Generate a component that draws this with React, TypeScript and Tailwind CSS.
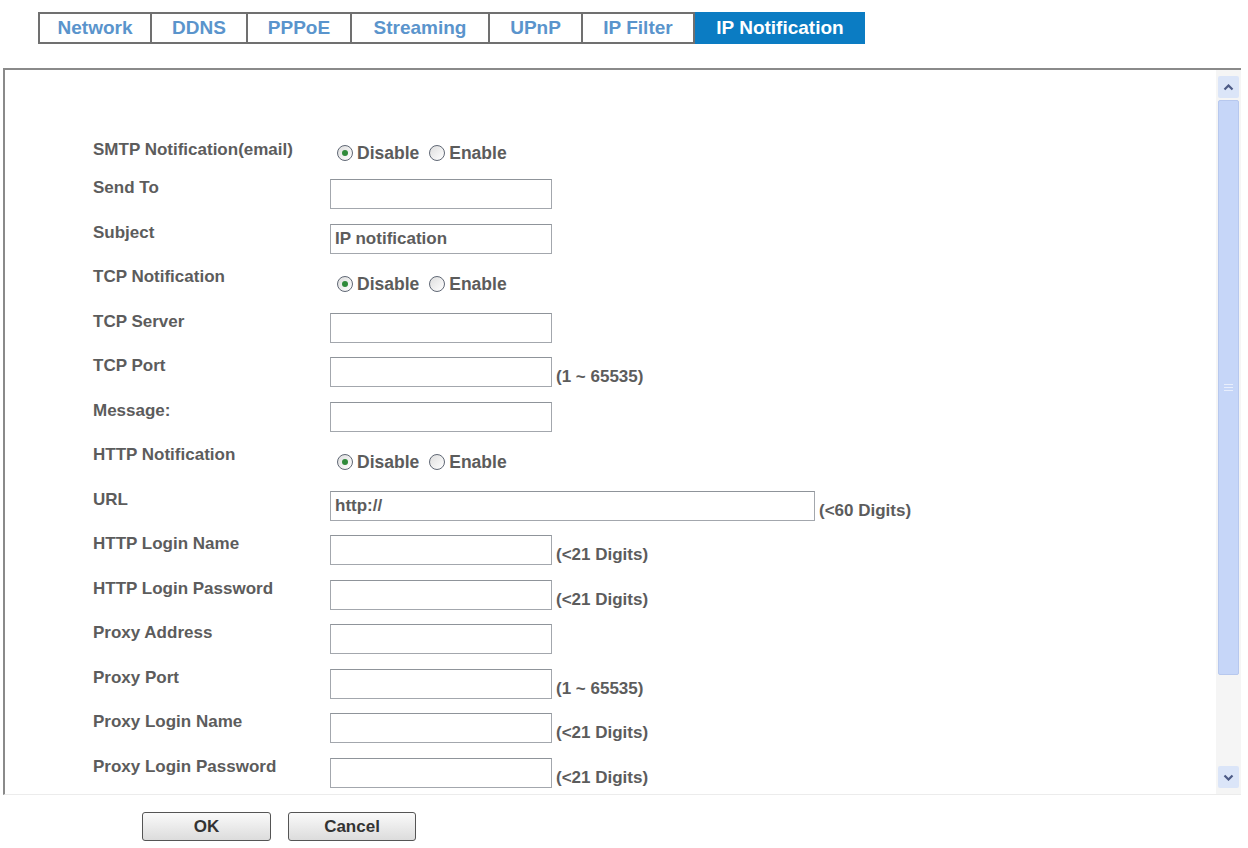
import React from 'react';

// ── IP Notification settings page ──────────────────────────────────────────

const tabs = [
    { name: 'Network', w: 'w-[114px]' },
    { name: 'DDNS', w: 'w-[96px]' },
    { name: 'PPPoE', w: 'w-[104px]' },
    { name: 'Streaming', w: 'w-[138px]' },
    { name: 'UPnP', w: 'w-[93px]' },
    { name: 'IP Filter', w: 'w-[112px]' },
    { name: 'IP Notification', w: 'w-[170px]', active: true },
];

type Row =
    | { label: string; kind: 'radio' }
    | { label: string; kind: 'input'; value?: string; wide?: boolean; hint?: string };

const rows: Row[] = [
    { label: 'Send To', kind: 'input' },
    { label: 'Subject', kind: 'input', value: 'IP notification' },
    { label: 'TCP Notification', kind: 'radio' },
    { label: 'TCP Server', kind: 'input' },
    { label: 'TCP Port', kind: 'input', hint: '(1 ~ 65535)' },
    { label: 'Message:', kind: 'input' },
    { label: 'HTTP Notification', kind: 'radio' },
    { label: 'URL', kind: 'input', value: 'http://', wide: true, hint: '(<60 Digits)' },
    { label: 'HTTP Login Name', kind: 'input', hint: '(<21 Digits)' },
    { label: 'HTTP Login Password', kind: 'input', hint: '(<21 Digits)' },
    { label: 'Proxy Address', kind: 'input' },
    { label: 'Proxy Port', kind: 'input', hint: '(1 ~ 65535)' },
    { label: 'Proxy Login Name', kind: 'input', hint: '(<21 Digits)' },
    { label: 'Proxy Login Password', kind: 'input', hint: '(<21 Digits)' },
];

function Radio({ checked }: { checked?: boolean }) {
    return (
        <span className="flex h-[16px] w-[16px] items-center justify-center rounded-full border-[1.5px] border-[#5f6774] bg-gradient-to-br from-[#dedede] to-white">
            {checked && <span className="h-[6px] w-[6px] rounded-full bg-[#2f8a3a]" />}
        </span>
    );
}

function RadioGroup({ first }: { first?: boolean }) {
    return (
        <div className={`${first ? 'mt-[3px]' : 'mt-[7px]'} flex items-center pl-[7px] text-[17.5px] leading-[20px]`}>
            <Radio checked />
            <span className="ml-[4px]">Disable</span>
            <span className="ml-[10px]" />
            <Radio />
            <span className="ml-[4px]">Enable</span>
        </div>
    );
}

function Field({ row }: { row: Extract<Row, { kind: 'input' }> }) {
    return (
        <div className="flex items-start">
            <div
                className={`mt-px h-[30px] ${row.wide ? 'w-[485px]' : 'w-[222px]'} border border-[#a3a7ad] border-t-[#8f949a] bg-white px-[4px] text-[17px] leading-[28px]`}
            >
                {row.value}
            </div>
            {row.hint && <span className="ml-[4px] mt-[11px] text-[17px] leading-[20px]">{row.hint}</span>}
        </div>
    );
}

function Scrollbar() {
    return (
        <div className="flex w-[25px] flex-col bg-[#f5f5f5] pb-[6px] pt-[6px]">
            <div className="mx-[2px] flex h-[22px] items-center justify-center rounded-[2px] bg-[#dbe5f8]">
                <svg width="11" height="7" viewBox="0 0 11 7">
                    <path d="M1.5 5.5 L5.5 1.5 L9.5 5.5" fill="none" stroke="#4d5b86" strokeWidth="2.2" />
                </svg>
            </div>
            <div className="mx-[2px] mt-[2px] flex h-[575px] items-center justify-center rounded-[2px] border border-[#b7c8ee] bg-[#c6d6f8]">
                <div className="flex flex-col gap-[2px]">
                    <span className="h-px w-[9px] bg-[#e8eefc]" />
                    <span className="h-px w-[9px] bg-[#e8eefc]" />
                    <span className="h-px w-[9px] bg-[#e8eefc]" />
                </div>
            </div>
            <div className="flex-1" />
            <div className="mx-[2px] flex h-[22px] items-center justify-center rounded-[2px] bg-[#dbe5f8]">
                <svg width="11" height="7" viewBox="0 0 11 7">
                    <path d="M1.5 1.5 L5.5 5.5 L9.5 1.5" fill="none" stroke="#4d5b86" strokeWidth="2.2" />
                </svg>
            </div>
        </div>
    );
}

export default function App() {
    return (
        <div
            className="h-[848px] w-[1248px] overflow-hidden bg-white font-bold text-[#5c5c5c]"
            style={{ fontFamily: '"Liberation Sans", Arial, sans-serif' }}
        >
            {/* tabs */}
            <div className="ml-[38px] mt-[12px] flex h-[32px]">
                {tabs.map((t, i) => (
                    <div
                        key={t.name}
                        className={`flex ${t.w} items-center justify-center text-[19px] ${
                            t.active
                                ? 'bg-[#0b7cc3] text-white'
                                : `border-y-2 border-r-2 border-[#707070] ${i === 0 ? 'border-l-2' : ''} text-[#5a94cc]`
                        }`}
                    >
                        {t.name}
                    </div>
                ))}
            </div>

            {/* frame */}
            <div className="ml-[3px] mt-[24px] flex h-[727px] w-[1238px] border-l-2 border-t-2 border-[#8a8a8a] border-b border-b-[#ececec]">
                <div className="flex-1 overflow-hidden pl-[88px] pt-[70px]">
                    <div className="flex h-[38px] items-start">
                        <div className="w-[237px] text-[17px] leading-[20px]">SMTP Notification(email)</div>
                        <RadioGroup first />
                    </div>
                    {rows.map((r) => (
                        <div key={r.label} className="flex h-[44.5px] items-start">
                            <div className="w-[237px] text-[17px] leading-[20px]">{r.label}</div>
                            {r.kind === 'radio' ? <RadioGroup /> : <Field row={r} />}
                        </div>
                    ))}
                </div>
                <Scrollbar />
            </div>

            {/* buttons */}
            <div className="ml-[142px] mt-[17px] flex gap-[17px]">
                <button className="h-[29px] w-[129px] rounded-[3px] border border-[#555] bg-gradient-to-b from-[#fafafa] to-[#dcdcdc] text-[17px] font-bold text-[#333]">
                    OK
                </button>
                <button className="h-[29px] w-[128px] rounded-[3px] border border-[#555] bg-gradient-to-b from-[#fafafa] to-[#dcdcdc] text-[17px] font-bold text-[#333]">
                    Cancel
                </button>
            </div>
        </div>
    );
}
